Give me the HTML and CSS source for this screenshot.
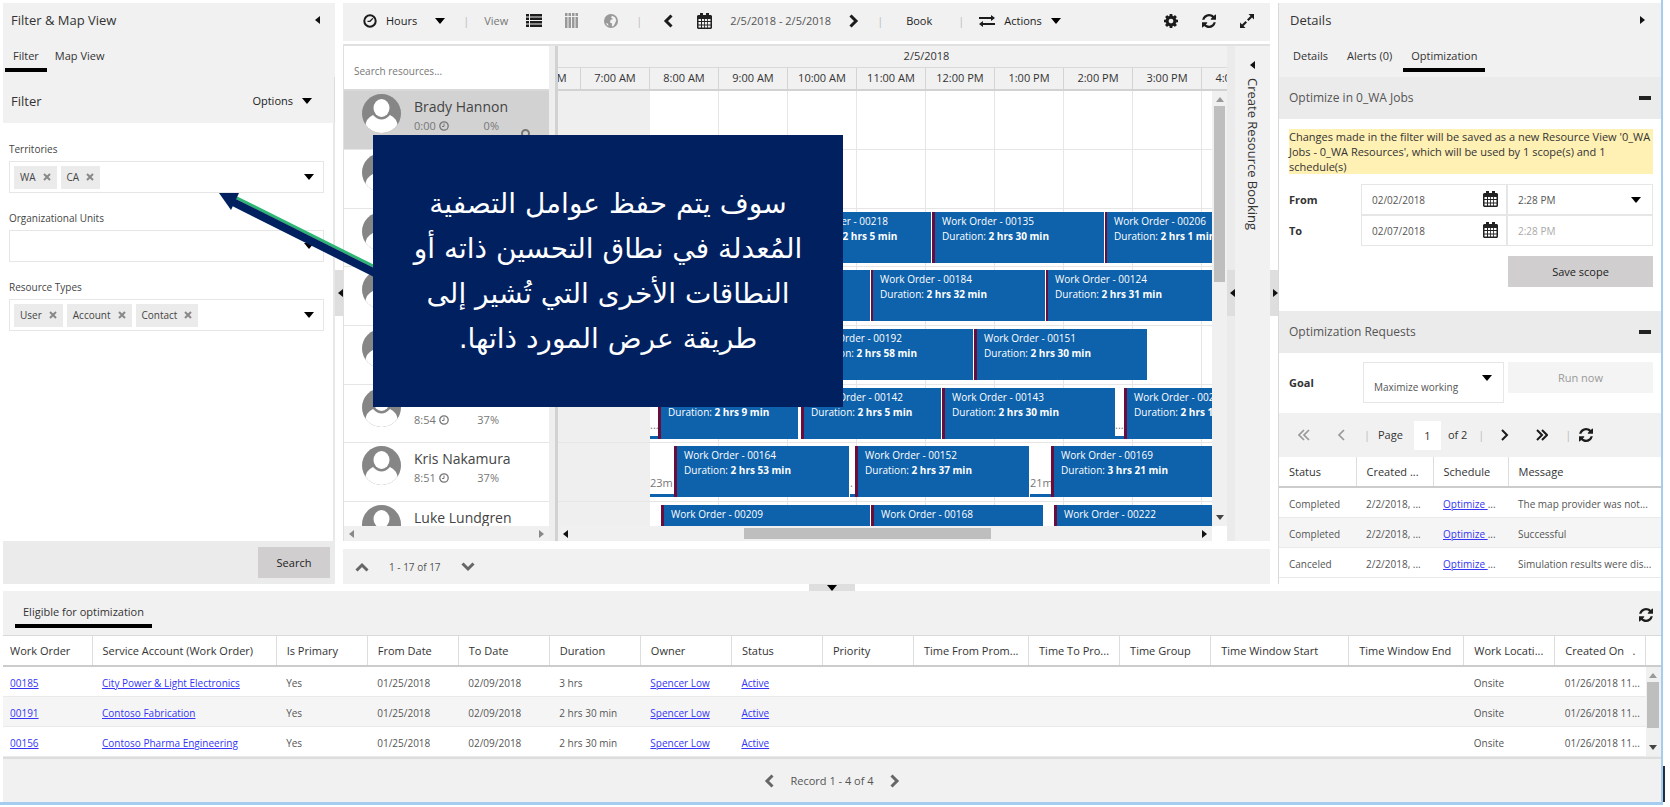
FILE: index.html
```html
<!DOCTYPE html>
<html lang="en">
<head>
<meta charset="utf-8">
<title>Schedule Board</title>
<link rel="stylesheet" href="styles.css">
</head>
<body>
<svg class="sprite" aria-hidden="true">
  <symbol id="down" viewBox="0 0 10 6"><path d="M0 0h10L5 6z"/></symbol>
  <symbol id="left" viewBox="0 0 5 8"><path d="M5 0v8L0 4z"/></symbol>
  <symbol id="right" viewBox="0 0 5 8"><path d="M0 0v8l5-4z"/></symbol>
  <symbol id="up" viewBox="0 0 10 6"><path d="M0 6h10L5 0z"/></symbol>
  <symbol id="chev-left" viewBox="0 0 10 14"><path d="M8.500 1.500L3 7l5.500 5.500" fill="none" stroke="currentColor" stroke-width="3"/></symbol>
  <symbol id="chev-right" viewBox="0 0 10 14"><path d="M1.500 1.500L7 7l-5.500 5.500" fill="none" stroke="currentColor" stroke-width="3"/></symbol>
  <symbol id="chev-up" viewBox="0 0 14 10"><path d="M1.500 8.500L7 3l5.500 5.500" fill="none" stroke="currentColor" stroke-width="3"/></symbol>
  <symbol id="chev-down" viewBox="0 0 14 10"><path d="M1.500 1.500L7 7l5.500-5.500" fill="none" stroke="currentColor" stroke-width="3"/></symbol>
  <symbol id="angle-left" viewBox="0 0 8 12"><path d="M7 1L2 6l5 5" fill="none" stroke="currentColor" stroke-width="1.700"/></symbol>
  <symbol id="angle-right" viewBox="0 0 8 12"><path d="M1 1l5 5-5 5" fill="none" stroke="currentColor" stroke-width="2"/></symbol>
  <symbol id="first" viewBox="0 0 12 12"><path d="M6 1L1 6l5 5M11 1L6 6l5 5" fill="none" stroke="currentColor" stroke-width="1.700"/></symbol>
  <symbol id="last" viewBox="0 0 12 12"><path d="M1 1l5 5-5 5M6 1l5 5-5 5" fill="none" stroke="currentColor" stroke-width="2"/></symbol>
  <symbol id="close" viewBox="0 0 8 8"><path d="M1 1l6 6M7 1L1 7" fill="none" stroke="currentColor" stroke-width="2"/></symbol>
  <symbol id="clock" viewBox="0 0 14 14"><circle cx="7" cy="7" r="5.700" fill="none" stroke="currentColor" stroke-width="2"/><path d="M9.800 4.400L7 7.300H4.500" fill="none" stroke="currentColor" stroke-width="1.300"/></symbol>
  <symbol id="clock-s" viewBox="0 0 10 10"><circle cx="5" cy="5" r="4.200" fill="none" stroke="currentColor" stroke-width="1.300"/><path d="M5 2.500V5.500H3" fill="none" stroke="currentColor"/></symbol>
  <symbol id="list" viewBox="0 0 16 13"><path d="M0 0h3v2.500H0zM4 0h12v2.500H4zM0 3.500h3V6H0zM4 3.500h12V6H4zM0 7h3v2.500H0zM4 7h12v2.500H4zM0 10.500h3V13H0zM4 10.500h12V13H4z"/></symbol>
  <symbol id="cols" viewBox="0 0 13 15"><path d="M0 0h2.500v3H0zM3.500 0H6v3H3.500zM7 0h2.500v3H7zM10.500 0H13v3h-2.500zM0 4h2.500v11H0zM3.500 4H6v11H3.500zM7 4h2.500v11H7zM10.500 4H13v11h-2.500z"/></symbol>
  <symbol id="globe" viewBox="0 0 14 14"><circle cx="7" cy="7" r="7"/><path d="M8 1.800l3 1.400 1.300 3L11 9.500 9.500 12 7.800 12.600 8 9.500 6 8.500 6.500 6 9 5 7 3.500z" fill="#f1f1f1"/><path d="M2 9l2 .8.500 2.200L3 11z" fill="#f1f1f1"/></symbol>
  <symbol id="calendar" viewBox="0 0 15 16"><path fill-rule="evenodd" d="M1 2h2V0h3v2h3V0h3v2h2l1 1v12l-1 1H1l-1-1V3zM1.500 6v2H4V6zM5 6v2h2.200V6zM8 6v2h2.200V6zM11 6v2h2.500V6zM1.500 9v2.500H4V9zM5 9v2.500h2.200V9zM8 9v2.500h2.200V9zM11 9v2.500h2.500V9zM1.500 12.500v2H4v-2zM5 12.500v2h2.200v-2zM8 12.500v2h2.200v-2zM11 12.500v2h2.500v-2z"/></symbol>
  <symbol id="exchange" viewBox="0 0 16 12"><path d="M0 2h12V0l4 3-4 3V4H0zM16 8H4V6L0 9l4 3v-2h12z"/></symbol>
  <symbol id="expand" viewBox="0 0 14 14"><path d="M8.500 0H14v5.500L12 3.500 8.500 7 7 5.500 10.500 2zM5.500 14H0V8.500l2 2L5.500 7 7 8.500 3.500 12z"/></symbol>
  <symbol id="refresh" viewBox="128 128 1536 1536"><path d="M1639 1056q0 5-1 7-64 268-268 434.500t-478 166.500q-146 0-282.500-55t-243.500-157l-129 129q-19 19-45 19t-45-19-19-45v-448q0-26 19-45t45-19h448q26 0 45 19t19 45-19 45l-137 137q71 66 161 102t187 36q134 0 250-65t186-179q11-17 53-117 8-23 30-23h192q13 0 22.500 9.500t9.500 22.500zm25-800v448q0 26-19 45t-45 19h-448q-26 0-45-19t-19-45 19-45l138-138q-148-137-349-137-134 0-250 65t-186 179q-11 17-53 117-8 23-30 23h-199q-13 0-22.500-9.500t-9.500-22.500v-7q65-268 270-434.500t480-166.500q146 0 284 55.500t245 156.500l130-129q19-19 45-19t45 19 19 45z"/></symbol>
  <symbol id="cog" viewBox="128 128 1536 1536"><path d="M1152 896q0-106-75-181t-181-75-181 75-75 181 75 181 181 75 181-75 75-181zm512-109v222q0 12-8 23t-20 13l-185 28q-19 54-39 91 35 50 107 138 10 12 10 25t-9 23q-27 37-99 108t-94 71q-12 0-26-9l-138-108q-44 23-91 38-16 136-29 186-7 28-36 28h-222q-14 0-24.500-8.500t-11.500-21.500l-28-184q-49-16-90-37l-141 107q-10 9-25 9-14 0-25-11-126-114-165-168-7-10-7-23 0-12 8-23 15-21 51-66.500t54-70.500q-27-50-41-99l-183-27q-13-2-21-12.500t-8-23.500v-222q0-12 8-23t19-13l186-28q14-46 39-92-40-57-107-138-10-12-10-24 0-10 9-23 26-36 98.500-107.500t94.500-71.500q13 0 26 10l138 107q44-23 91-38 16-136 29-186 7-28 36-28h222q14 0 24.500 8.500t11.500 21.500l28 184q49 16 90 37l142-107q9-9 24-9 13 0 25 10 129 119 165 170 7 8 7 22 0 12-8 23-15 21-51 66.500t-54 70.500q26 50 41 98l183 28q13 2 21 12.500t8 23.500z"/></symbol>
  <symbol id="avatar" viewBox="0 0 39 39"><clipPath id="round"><circle cx="19.500" cy="19.500" r="19.500"/></clipPath><g clip-path="url(#round)"><path d="M0 0h39v39H0z" fill="#868686"/><ellipse cx="19.500" cy="14" rx="8" ry="9" fill="#fff"/><path d="M3 39v-6q1-9 8-12 8.500 9 17 0 7 3 8 12v6z" fill="#fff"/></g></symbol>
</svg>

<div class="app">
  <div class="upper">
    <aside class="filter-panel">
      <header class="panel-title"><h2>Filter &amp; Map View</h2><button class="bare" aria-label="Collapse"><svg class="tri"><use href="#left"/></svg></button></header>
      <nav class="tabs"><button class="tab on">Filter</button><button class="tab">Map View</button></nav>
      <div class="filter-head"><h3>Filter</h3><button class="bare options">Options <svg class="caret"><use href="#down"/></svg></button></div>
      <div class="filter-body">
        <div class="field"><span id="l1">Territories</span>
          <div class="combo" role="group" aria-labelledby="l1"><span class="chip">WA<svg><use href="#close"/></svg></span><span class="chip">CA<svg><use href="#close"/></svg></span><button class="bare" aria-label="Open territories"><svg class="caret"><use href="#down"/></svg></button></div></div>
        <div class="field"><span id="l2">Organizational Units</span>
          <div class="combo" role="group" aria-labelledby="l2"><button class="bare" aria-label="Open organizational units"><svg class="caret"><use href="#down"/></svg></button></div></div>
        <div class="field"><span id="l3">Resource Types</span>
          <div class="combo" role="group" aria-labelledby="l3"><span class="chip">User<svg><use href="#close"/></svg></span><span class="chip">Account<svg><use href="#close"/></svg></span><span class="chip">Contact<svg><use href="#close"/></svg></span><button class="bare" aria-label="Open resource types"><svg class="caret"><use href="#down"/></svg></button></div></div>
      </div>
      <footer class="filter-foot"><button class="solid search">Search</button></footer>
    </aside>

    <div class="gutter"><div class="grip"><svg class="tri"><use href="#left"/></svg></div></div>

    <main class="board">
      <div class="toolbar">
        <button class="bare hours"><svg class="i14"><use href="#clock"/></svg>Hours</button>
        <svg class="caret"><use href="#down"/></svg>
        <span class="sep">|</span>
        <span class="muted">View</span>
        <button class="bare" aria-label="List view"><svg class="list"><use href="#list"/></svg></button>
        <button class="bare dim" aria-label="Column view"><svg class="cols"><use href="#cols"/></svg></button>
        <button class="bare dim" aria-label="Map view"><svg class="i14"><use href="#globe"/></svg></button>
        <span class="sep">|</span>
        <button class="bare prev" aria-label="Previous"><svg class="chev"><use href="#chev-left"/></svg></button>
        <button class="bare" aria-label="Pick date"><svg class="cal"><use href="#calendar"/></svg></button>
        <span class="range">2/5/2018 - 2/5/2018</span>
        <button class="bare" aria-label="Next"><svg class="chev"><use href="#chev-right"/></svg></button>
        <span class="sep">|</span>
        <button class="bare book">Book</button>
        <span class="sep">|</span>
        <button class="bare actions"><svg class="exch"><use href="#exchange"/></svg>Actions <svg class="caret"><use href="#down"/></svg></button>
        <div class="tools">
          <button class="bare" aria-label="Settings"><svg class="i14"><use href="#cog"/></svg></button>
          <button class="bare" aria-label="Refresh"><svg class="i14"><use href="#refresh"/></svg></button>
          <button class="bare" aria-label="Full screen"><svg class="i14"><use href="#expand"/></svg></button>
        </div>
      </div>

      <div class="schedule">
        <section class="resources">
          <input class="find" type="text" placeholder="Search resources..." aria-label="Search resources">
          <ul class="people">
            <li class="picked"><svg class="avatar"><use href="#avatar"/></svg><div class="who"><b>Brady Hannon</b><p><span>0:00</span><svg><use href="#clock-s"/></svg><span class="pct">0%</span></p></div><i class="pin"></i></li>
            <li><svg class="avatar"><use href="#avatar"/></svg></li>
            <li><svg class="avatar"><use href="#avatar"/></svg></li>
            <li><svg class="avatar"><use href="#avatar"/></svg></li>
            <li><svg class="avatar"><use href="#avatar"/></svg></li>
            <li><svg class="avatar"><use href="#avatar"/></svg><div class="who"><b>&nbsp;</b><p><span>8:54</span><svg><use href="#clock-s"/></svg><span class="pct">37%</span></p></div></li>
            <li><svg class="avatar"><use href="#avatar"/></svg><div class="who"><b>Kris Nakamura</b><p><span>8:51</span><svg><use href="#clock-s"/></svg><span class="pct">37%</span></p></div></li>
            <li><svg class="avatar"><use href="#avatar"/></svg><div class="who"><b>Luke Lundgren</b></div></li>
          </ul>
          <div class="hscroll faint"><svg class="tri"><use href="#left"/></svg><svg class="tri"><use href="#right"/></svg></div>
        </section>
        <div class="divider"></div>
        <section class="timeline">
          <div class="day">2/5/2018</div>
          <div class="hours-row"><span>6:00 AM</span><span>7:00 AM</span><span>8:00 AM</span><span>9:00 AM</span><span>10:00 AM</span><span>11:00 AM</span><span>12:00 PM</span><span>1:00 PM</span><span>2:00 PM</span><span>3:00 PM</span><span>4:00 PM</span></div>
          <div class="lanes-wrap">
            <div class="lanes">
              <div class="lane"></div>
              <div class="lane"></div>
              <div class="lane">
                <div class="job" style="left:228px;width:145px">Work Order - 00218<br>Duration: <b>2 hrs 5 min</b></div>
                <div class="job" style="left:374px;width:172px">Work Order - 00135<br>Duration: <b>2 hrs 30 min</b></div>
                <div class="job thin" style="left:547px;width:140px">Work Order - 00206<br>Duration: <b>2 hrs 1 min</b></div>
              </div>
              <div class="lane">
                <div class="job" style="left:120px;width:192px"></div>
                <div class="job thin" style="left:313px;width:174px">Work Order - 00184<br>Duration: <b>2 hrs 32 min</b></div>
                <div class="job thin" style="left:488px;width:174px">Work Order - 00124<br>Duration: <b>2 hrs 31 min</b></div>
              </div>
              <div class="lane">
                <div class="job" style="left:242px;width:173px">Work Order - 00192<br>Duration: <b>2 hrs 58 min</b></div>
                <div class="job" style="left:416px;width:173px">Work Order - 00151<br>Duration: <b>2 hrs 30 min</b></div>
              </div>
              <div class="lane">
                <div class="trip" style="left:92px;width:8px">...</div>
                <div class="job" style="left:100px;width:140px"><br>Duration: <b>2 hrs 9 min</b></div>
                <div class="job" style="left:243px;width:140px">Work Order - 00142<br>Duration: <b>2 hrs 5 min</b></div>
                <div class="job" style="left:384px;width:173px">Work Order - 00143<br>Duration: <b>2 hrs 30 min</b></div>
                <div class="trip" style="left:557px;width:10px">...</div>
                <div class="job" style="left:566px;width:150px">Work Order - 00217<br>Duration: <b>2 hrs 10 min</b></div>
              </div>
              <div class="lane">
                <div class="trip" style="left:92px;width:24px">23m</div>
                <div class="job" style="left:116px;width:175px">Work Order - 00164<br>Duration: <b>2 hrs 53 min</b></div>
                <div class="trip" style="left:292px;width:5px">.</div>
                <div class="job" style="left:297px;width:174px">Work Order - 00152<br>Duration: <b>2 hrs 37 min</b></div>
                <div class="trip" style="left:472px;width:21px">21m</div>
                <div class="job" style="left:493px;width:230px">Work Order - 00169<br>Duration: <b>3 hrs 21 min</b></div>
              </div>
              <div class="lane">
                <div class="job" style="left:103px;width:209px">Work Order - 00209</div>
                <div class="job" style="left:313px;width:172px">Work Order - 00168</div>
                <div class="job" style="left:496px;width:200px">Work Order - 00222</div>
              </div>
            </div>
            <div class="vscroll"><svg class="caret faint-ico"><use href="#up"/></svg><span class="vthumb"></span><svg class="caret"><use href="#down"/></svg></div>
          </div>
          <div class="hscroll wide"><svg class="tri"><use href="#left"/></svg><span class="hthumb"></span><svg class="tri"><use href="#right"/></svg></div>
        </section>
        <div class="gutter inner"><div class="grip"><svg class="tri"><use href="#left"/></svg></div></div>
        <aside class="create"><svg class="tri"><use href="#left"/></svg><span>Create Resource Booking</span></aside>
      </div>
      <div class="board-pager"><button class="bare" aria-label="Up"><svg class="wide-chev"><use href="#chev-up"/></svg></button><span>1 - 17 of 17</span><button class="bare" aria-label="Down"><svg class="wide-chev"><use href="#chev-down"/></svg></button></div>
    </main>

    <div class="gutter"><div class="grip"><svg class="tri"><use href="#right"/></svg></div></div>

    <aside class="details">
      <header class="panel-title"><h2>Details</h2><button class="bare" aria-label="Collapse"><svg class="tri"><use href="#right"/></svg></button></header>
      <nav class="tabs"><button class="tab">Details</button><button class="tab">Alerts (0)</button><button class="tab on">Optimization</button></nav>
      <div class="section-head"><h3>Optimize in 0_WA Jobs</h3><button class="bare minus" aria-label="Collapse section"></button></div>
      <form class="scope">
        <p class="notice">Changes made in the filter will be saved as a new Resource View '0_WA<br>Jobs - 0_WA Resources', which will be used by 1 scope(s) and 1<br>schedule(s)</p>
        <label for="from">From</label>
        <div class="box"><input id="from" value="02/02/2018"><svg class="cal"><use href="#calendar"/></svg></div>
        <div class="box"><select aria-label="From time"><option>2:28 PM</option></select><svg class="caret"><use href="#down"/></svg></div>
        <label for="to">To</label>
        <div class="box"><input id="to" value="02/07/2018"><svg class="cal"><use href="#calendar"/></svg></div>
        <div class="box"><input aria-label="To time" value="2:28 PM" disabled></div>
        <button type="button" class="solid save">Save scope</button>
      </form>
      <div class="section-head"><h3>Optimization Requests</h3><button class="bare minus" aria-label="Collapse section"></button></div>
      <div class="goal"><label for="goal">Goal</label><div class="box tall"><select id="goal"><option>Maximize working</option></select><svg class="caret"><use href="#down"/></svg></div><button class="run" disabled>Run now</button></div>
      <div class="req-pager">
        <button class="bare dim" aria-label="First"><svg class="i12"><use href="#first"/></svg></button>
        <button class="bare dim" aria-label="Previous"><svg class="ang"><use href="#angle-left"/></svg></button>
        <span class="sep">|</span>
        <label for="page">Page</label><input id="page" value="1"><span class="of">of 2</span>
        <span class="sep">|</span>
        <button class="bare" aria-label="Next"><svg class="ang"><use href="#angle-right"/></svg></button>
        <button class="bare" aria-label="Last"><svg class="i12"><use href="#last"/></svg></button>
        <span class="sep">|</span>
        <button class="bare" aria-label="Refresh"><svg class="i14"><use href="#refresh"/></svg></button>
      </div>
      <table class="grid requests">
        <colgroup><col class="w77"><col class="w77"><col class="w75"><col></colgroup>
        <thead><tr><th>Status</th><th>Created ...</th><th>Schedule</th><th>Message</th></tr></thead>
        <tbody>
          <tr><td>Completed</td><td>2/2/2018, ...</td><td><a href="#">Optimize </a>...</td><td>The map provider was not...</td></tr>
          <tr><td>Completed</td><td>2/2/2018, ...</td><td><a href="#">Optimize </a>...</td><td>Successful</td></tr>
          <tr><td>Canceled</td><td>2/2/2018, ...</td><td><a href="#">Optimize </a>...</td><td>Simulation results were dis...</td></tr>
        </tbody>
      </table>
    </aside>
  </div>

  <div class="row-gutter"><div class="grip"><svg class="caret"><use href="#down"/></svg></div></div>

  <section class="orders">
    <div class="orders-head"><button class="tab on">Eligible for optimization</button><button class="bare" aria-label="Refresh"><svg class="i14"><use href="#refresh"/></svg></button></div>
    <table class="grid work">
      <colgroup><col class="w89"><col class="w184"><col class="w91"><col class="w91"><col class="w91"><col class="w91"><col class="w91"><col class="w91"><col class="w91"><col class="w115"><col class="w91"><col class="w91"><col class="w138"><col class="w115"><col class="w91"><col class="w91"><col class="w15"></colgroup>
      <thead><tr><th>Work Order</th><th>Service Account (Work Order)</th><th>Is Primary</th><th>From Date</th><th>To Date</th><th>Duration</th><th>Owner</th><th>Status</th><th>Priority</th><th>Time From Prom...</th><th>Time To Pro...</th><th>Time Group</th><th>Time Window Start</th><th>Time Window End</th><th>Work Locati...</th><th>Created On &nbsp; .</th><th></th></tr></thead>
      <tbody>
        <tr><td><a href="#">00185</a></td><td><a href="#">City Power &amp; Light Electronics</a></td><td>Yes</td><td>01/25/2018</td><td>02/09/2018</td><td>3 hrs</td><td><a href="#">Spencer Low</a></td><td><a href="#">Active</a></td><td></td><td></td><td></td><td></td><td></td><td></td><td>Onsite</td><td>01/26/2018 11...</td><td class="bar" rowspan="3"><div class="vscroll"><svg class="caret faint-ico"><use href="#up"/></svg><span class="vthumb short"></span><svg class="caret"><use href="#down"/></svg></div></td></tr>
        <tr><td><a href="#">00191</a></td><td><a href="#">Contoso Fabrication</a></td><td>Yes</td><td>01/25/2018</td><td>02/09/2018</td><td>2 hrs 30 min</td><td><a href="#">Spencer Low</a></td><td><a href="#">Active</a></td><td></td><td></td><td></td><td></td><td></td><td></td><td>Onsite</td><td>01/26/2018 11...</td></tr>
        <tr><td><a href="#">00156</a></td><td><a href="#">Contoso Pharma Engineering</a></td><td>Yes</td><td>01/25/2018</td><td>02/09/2018</td><td>2 hrs 30 min</td><td><a href="#">Spencer Low</a></td><td><a href="#">Active</a></td><td></td><td></td><td></td><td></td><td></td><td></td><td>Onsite</td><td>01/26/2018 11...</td></tr>
      </tbody>
    </table>
    <footer class="orders-foot"><button class="bare" aria-label="Previous"><svg class="chev"><use href="#chev-left"/></svg></button><span>Record 1 - 4 of 4</span><button class="bare" aria-label="Next"><svg class="chev"><use href="#chev-right"/></svg></button></footer>
  </section>
  <div class="edge"></div>
</div>

<svg class="arrow" viewBox="0 0 160 84" aria-hidden="true"><path d="M14 3L160 76" stroke="#2bb673" stroke-width="3"/><path d="M12 8L160 82" stroke="#002060" stroke-width="8"/><path d="M0 0h20L12 17z" fill="#002060"/></svg>
<div class="callout" lang="ar" dir="rtl">سوف يتم حفظ عوامل التصفية<br>المُعدلة في نطاق التحسين ذاته أو<br>النطاقات الأخرى التي تُشير إلى<br>طريقة عرض المورد ذاتها.</div>
</body>
</html>
```
FILE: styles.css
```css
* { box-sizing: border-box; }
body { margin: 0; background: #fff; color: #333; font: 11px/16px "Open Sans", "Noto Sans", sans-serif; }
h2, h3, p, ul { margin: 0; padding: 0; font-weight: 400; }
ul { list-style: none; }
button, input, select { font: inherit; color: inherit; margin: 0; border-radius: 0; }
svg { display: block; flex: none; fill: currentColor; }
a { color: #3535f3; }
.sprite { position: absolute; width: 0; height: 0; }

.bare { display: flex; align-items: center; padding: 0; border: 0; background: none; color: #1c1c1c; }
.solid { border: 0; background: #d0cece; height: 31px; color: #222; }
.bare.dim { color: #999; }
.caret { width: 10px; height: 6px; color: #000; }
.tri { width: 5px; height: 8px; color: #111; }
.i14 { width: 14px; height: 14px; }
.i12 { width: 12px; height: 12px; }
.chev { width: 10px; height: 14px; }
.wide-chev { width: 14px; height: 10px; color: #666; }
.ang { width: 8px; height: 12px; }
.cal { width: 15px; height: 16px; color: #222; }
.list { width: 16px; height: 13px; }
.cols { width: 13px; height: 15px; }
.exch { width: 16px; height: 12px; }

.app { position: relative; display: flex; flex-direction: column; height: calc(100vh - 2px); min-height: 780px; margin-right: 7px; padding: 3px 0 0 3px; border: solid #a5cdef; border-width: 0 2px 3px 0; }
.upper { display: flex; flex: 1; min-height: 0; }

.panel-title { display: flex; justify-content: space-between; align-items: center; height: 35px; padding: 0 15px 2px 8px; }
.panel-title h2, .filter-head h3 { font-size: 13px; }
.tabs { display: flex; height: 39px; padding-left: 2px; align-items: flex-start; }
.tab { height: 34px; padding: 6px 8px 0; border: 0; border-bottom: 4px solid transparent; background: none; }
.tab.on { border-color: #000; }

.filter-panel { display: flex; flex-direction: column; width: 332px; background: #f1f1f1; }
.filter-head { display: flex; justify-content: space-between; align-items: center; height: 46px; padding: 2px 22px 0 8px; border-right: 1px solid #ddd; }
.options { gap: 9px; }
.filter-body { flex: 1; padding: 18px 9px 0 6px; background: #fff; border-right: 2px solid #e8e8e8; }
.field { display: flex; flex-direction: column; gap: 4px; height: 69px; color: #444; font-size: 10px; }
.combo { display: flex; align-items: center; gap: 4px; height: 32px; padding: 0 9px 0 4px; border: 1px solid #e6e6e6; }
.combo .bare { margin-left: auto; }
.chip { display: flex; align-items: center; gap: 7px; height: 23px; padding: 0 6px; background: #ebebeb; }
.chip svg { width: 8px; height: 8px; color: #888; }
.filter-foot { display: flex; justify-content: flex-end; height: 43px; padding: 6px 5px; background: #ebebeb; }
.search { width: 72px; }

.gutter { display: flex; align-items: flex-start; width: 8px; padding-top: 267px; }
.grip { display: flex; align-items: center; justify-content: flex-end; width: 100%; height: 46px; background: #dedede; }
.gutter.inner { padding-top: 224px; background: #ebebeb; }

.board { display: flex; flex-direction: column; flex: 1; min-width: 0; }
.toolbar { display: flex; align-items: center; gap: 18px; height: 38px; padding: 0 16px 3px 20px; background: #f1f1f1; }
.toolbar .hours, .toolbar .actions { gap: 9px; }
.sep { width: 3px; color: #bbb; }
.muted { color: #777; }
.list { margin-right: 5px; }
.cols { margin-right: 8px; }
.prev { margin-left: 6px; }
.toolbar .cal { margin-left: 6px; }
.book { margin: 0 8px; }
.range { color: #555; }
.tools { display: flex; gap: 24px; margin-left: auto; }

.schedule { display: flex; flex: 1; min-height: 0; margin-top: 3px; border-top: 2px solid #e0e0e0; border-left: 1px solid #e0e0e0; }
.resources { display: flex; flex-direction: column; width: 205px; }
.find { height: 43px; padding: 6px 10px 0; border: 0; font-size: 10px; }
.find::placeholder { color: #777; opacity: 1; }
.people { flex: 1; min-height: 0; overflow: hidden; border-top: 2px solid #d9d9d9; }
.people li { display: flex; height: 59px; padding: 3px 0 0 18px; border-bottom: 1px solid #e6e6e6; gap: 13px; }
.people li:nth-child(3n) { height: 58px; }
.picked { background: #d2d2d2; position: relative; }
.avatar { width: 39px; height: 39px; }
.who b { display: block; font-weight: 400; font-size: 14px; line-height: 25px; color: #444; }
.who p { display: flex; align-items: center; gap: 3px; width: 85px; line-height: 13px; color: #777; }
.who p svg { width: 10px; height: 10px; }
.pct { margin-left: auto; }
.pin { position: absolute; right: 19px; top: 38px; width: 9px; height: 9px; border: 2px solid #777; border-radius: 50%; }
.divider { width: 9px; border: solid #d2d2d2; border-width: 0 3px 0 0; background: #eee; }

.timeline { display: flex; flex-direction: column; flex: 1; min-width: 0; background: #fff; }
.day { height: 21px; padding-left: 68px; background: #f1f1f1; text-align: center; line-height: 20px; }
.hours-row { display: flex; height: 22px; overflow: hidden; background: #f1f1f1; border-top: 1px solid #d9d9d9; }
.hours-row span { flex: none; width: 69px; border-right: 1px solid #d4d4d4; line-height: 20px; text-align: center; }
.hours-row span:first-child { margin-left: -46px; }
.lanes-wrap { display: flex; flex: 1; min-height: 0; border-top: 2px solid #d2d2d2; }
.lanes { flex: 1; min-width: 0; overflow: hidden; background: linear-gradient(90deg, #efefef 92px, transparent 92px), repeating-linear-gradient(90deg, transparent 0 68px, #e6e6e6 68px 69px) 23px 0; }
.lane { position: relative; height: 59px; border-bottom: 1px solid #e6e6e6; }
.lane:nth-child(3n) { height: 58px; }
.job { position: absolute; top: 3px; height: 51px; padding: 2px 0 0 7px; overflow: hidden; border-left: 3px solid #6b0d3c; background: #0e62ab; color: #fff; white-space: nowrap; font-size: 10px; line-height: 15px; }
.job.thin { border-left-width: 2px; }
.trip { position: absolute; top: 3px; height: 51px; padding-top: 29px; overflow: hidden; border-bottom: 3px solid #0e62ab; color: #777; }
.vscroll { display: flex; flex-direction: column; align-items: center; width: 15px; padding: 6px 0; background: #f0f0f0; }
.vscroll .caret { width: 8px; height: 5px; color: #444; }
.vscroll .caret.faint-ico { color: #999; }
.vthumb { width: 11px; height: 176px; margin: 4px 0 auto; background: #bebebe; }
.hscroll { display: flex; align-items: center; justify-content: space-between; height: 15px; padding: 0 5px; background: #f0f0f0; }
.hscroll.wide { margin-right: 15px; }
.faint svg { color: #888; }
.hthumb { width: 247px; height: 11px; margin: 0 auto 0 176px; background: #bebebe; }
.create { display: flex; flex-direction: column; align-items: center; gap: 9px; width: 35px; padding-top: 15px; background: #f1f1f1; }
.create span { writing-mode: vertical-rl; font-size: 13px; }
.board-pager { display: flex; align-items: center; gap: 20px; height: 35px; margin-top: 8px; padding-left: 12px; background: #f1f1f1; color: #555; font-size: 10px; }

.details { display: flex; flex-direction: column; width: 383px; border-left: 1px solid #d9d9d9; background: #fff; }
.details .panel-title, .details .tabs { background: #f1f1f1; }
.details .tabs { padding-left: 6px; gap: 3px; }
.details .panel-title { padding: 0 16px 2px 11px; }
.section-head { display: flex; justify-content: space-between; align-items: center; height: 42px; padding: 0 10px; background: #ebebeb; }
.section-head h3 { font-size: 12px; color: #555; }
.minus { width: 12px; height: 4px; background: #222; }
.scope { display: grid; grid-template-columns: 72px 1fr 1fr; align-items: center; padding: 10px 8px 24px 10px; }
.notice { grid-column: 1 / -1; margin-bottom: 10px; background: #fff0b3; line-height: 15px; white-space: nowrap; }
.scope label, .goal label { font-weight: 700; }
.box { position: relative; height: 31px; border: 1px solid #e6e6e6; font-size: 10px; }
.box input, .box select { width: 100%; height: 100%; padding: 0 10px; border: 0; background: none; appearance: none; color: #555; }
.box input:disabled { color: #aaa; }
.box svg { position: absolute; right: 8px; top: 6px; pointer-events: none; }
.box .caret { right: 11px; top: 12px; }
.save { grid-column: 3; margin: 10px 0 0 1px; }
.goal { display: grid; grid-template-columns: 74px 141px 1fr; height: 60px; padding: 9px 8px 10px 10px; }
.goal label { align-self: center; }
.box.tall { height: 41px; }
.box.tall select { padding-top: 8px; }
.run { height: 31px; margin-left: 4px; border: 0; background: #f4f4f4; color: #999; }
.req-pager { display: flex; align-items: center; gap: 11px; height: 44px; padding-left: 18px; background: #f1f1f1; }
.req-pager .bare { justify-content: center; width: 14px; margin-right: 12px; }
.req-pager .bare + .sep { margin-left: -7px; }
.req-pager .of + .sep { margin-right: 6px; }
.req-pager input { width: 27px; height: 29px; border: 0; background: #fff; text-align: center; }
.req-pager .of { margin-left: -4px; }

.grid { width: 100%; table-layout: fixed; border-collapse: collapse; }
.grid th { height: 30px; padding: 0 0 0 10px; border-right: 1px solid #ddd; border-bottom: 2px solid #ccc; background: #fff; font-weight: 400; text-align: left; white-space: nowrap; overflow: hidden; }
.grid th:last-child { border-right: 0; }
.grid td { height: 30px; padding: 3px 0 0 10px; color: #555; font-size: 10px; white-space: nowrap; overflow: hidden; border-bottom: 1px solid #eaeaea; }
.grid tbody tr:nth-child(even) { background: #f5f5f5; }
.work th:first-child, .work td:first-child { padding-left: 7px; }
.w77 { width: 77px; } .w75 { width: 75px; } .w89 { width: 89px; } .w184 { width: 184px; } .w91 { width: 91px; } .w115 { width: 115px; } .w138 { width: 138px; } .w15 { width: 15px; }

.row-gutter { display: flex; justify-content: center; height: 7px; }
.row-gutter .grip { justify-content: center; width: 46px; height: 7px; }
.orders-head { display: flex; justify-content: space-between; height: 45px; padding: 3px 8px 0 12px; background: #f1f1f1; border-bottom: 1px solid #d9d9d9; }
.grid td.bar { padding: 0; background: #f0f0f0; }
.bar .vscroll { height: 89px; }
.vthumb.short { height: 46px; width: 12px; }
.orders-foot { display: flex; align-items: center; justify-content: center; gap: 16px; height: 45px; border-top: 2px solid #ddd; background: #f1f1f1; color: #555; }
.orders-foot .bare { color: #666; }
.edge { position: absolute; right: -4px; bottom: 0; width: 2px; height: 36px; background: #1f2f45; }

.arrow { position: absolute; left: 219px; top: 193px; width: 160px; height: 84px; }
.callout { position: absolute; left: 373px; top: 135px; display: grid; place-content: center; width: 470px; height: 272px; background: #002060; color: #fff; text-align: center; font: 28px/45px "DejaVu Sans", sans-serif; }
```
